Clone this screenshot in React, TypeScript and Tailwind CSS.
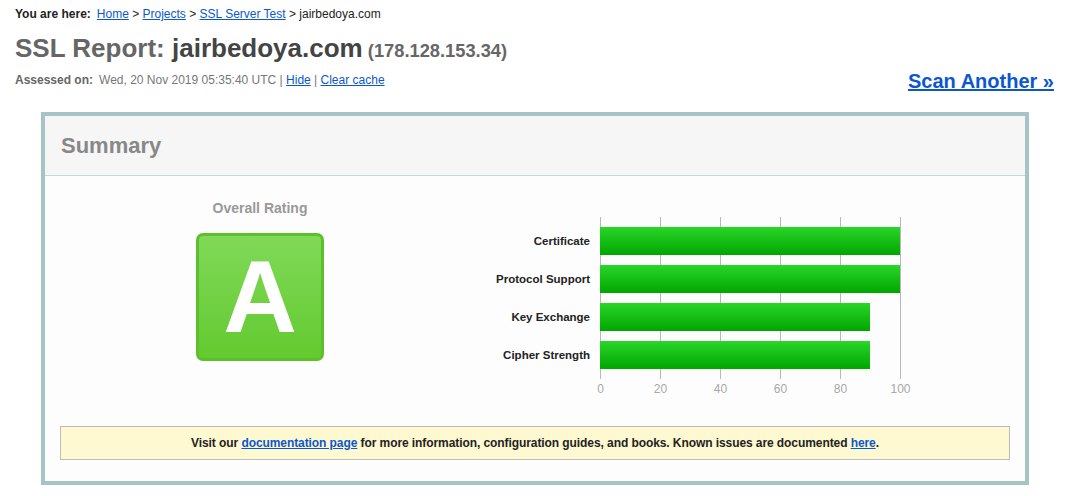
import React from "react";

const bars = [
  { label: "Certificate", value: 100 },
  { label: "Protocol Support", value: 100 },
  { label: "Key Exchange", value: 90 },
  { label: "Cipher Strength", value: 90 },
];

function Chart() {
  const x0 = 125;
  const ticks = [0, 20, 40, 60, 80, 100];
  return (
    <svg width="445" height="190" viewBox="0 0 445 190" className="block">
      <defs>
        <linearGradient id="barg" x1="0" y1="0" x2="0" y2="1">
          <stop offset="0" stopColor="#2ad62a" />
          <stop offset="1" stopColor="#00a600" />
        </linearGradient>
      </defs>
      {ticks.map((t) => (
        <line
          key={t}
          x1={x0 + t * 3 + 0.5}
          x2={x0 + t * 3 + 0.5}
          y1={7}
          y2={169}
          stroke="#b9b9b9"
          strokeWidth={1}
        />
      ))}
      {bars.map((b, i) => (
        <g key={b.label}>
          <rect x={x0} y={17 + i * 38} width={b.value * 3} height={28} fill="url(#barg)" />
          <text
            x={115}
            y={17 + i * 38 + 18}
            textAnchor="end"
            fontFamily="'Liberation Sans', Arial, sans-serif"
            fontWeight="bold"
            fontSize="11.5"
            fill="#222"
          >
            {b.label}
          </text>
        </g>
      ))}
      {ticks.map((t) => (
        <text
          key={"l" + t}
          x={x0 + t * 3 + 0.5}
          y={183}
          textAnchor="middle"
          fontFamily="'Liberation Sans', Arial, sans-serif"
          fontSize="12"
          fill="#a8a8a8"
        >
          {t}
        </text>
      ))}
    </svg>
  );
}

export default function App() {
  return (
    <div
      className="w-[1076px] h-[496px] overflow-hidden bg-white text-[#222]"
      style={{ fontFamily: "'Liberation Sans', Arial, sans-serif" }}
    >
      <div className="pl-[15px] pr-[22px]">
        <div className="pt-[6px] h-[22px] text-[12px] leading-[16px]">
          <span className="font-bold">You are here:</span>
          <span className="ml-[6px]">
            <a className="text-[#0b57d0] underline" href="#">Home</a>
            {" > "}
            <a className="text-[#0b57d0] underline" href="#">Projects</a>
            {" > "}
            <a className="text-[#0b57d0] underline" href="#">SSL Server Test</a>
            {" > jairbedoya.com"}
          </span>
        </div>
        <div className="mt-[11px] h-[30px] flex items-baseline font-bold whitespace-pre">
          <span className="text-[26px] leading-[30px] text-[#666]">SSL Report: </span>
          <span className="text-[26px] leading-[30px] text-[#444]">jairbedoya.com</span>
          <span className="text-[18.3px] leading-[30px] text-[#666]"> (178.128.153.34)</span>
        </div>
        <div className="mt-[6px] h-[24px] flex items-center justify-between">
          <div className="text-[12px] leading-[16px] -mt-[2px]">
            <span className="font-bold text-[#666]">Assessed on:</span>
            <span className="ml-[6px] text-[#777]">Wed, 20 Nov 2019 05:35:40 UTC</span>
            <span className="text-[#777]"> | </span>
            <a className="text-[#0b57d0] underline" href="#">Hide</a>
            <span className="text-[#777]"> | </span>
            <a className="text-[#0b57d0] underline" href="#">Clear cache</a>
          </div>
          <a className="text-[20px] leading-[24px] font-bold text-[#0b57d0] underline" href="#">
            Scan Another »
          </a>
        </div>
      </div>

      <div className="ml-[41px] mt-[19px] w-[988px] border-[4px] border-[#a6c4c6] bg-[#fdfdfd]">
        <div className="h-[60px] bg-[#f6f6f6] border-b border-[#c3d6d8] flex items-center pl-[16px]">
          <span className="text-[22px] leading-[26px] font-bold text-[#888]">Summary</span>
        </div>
        <div className="pb-[21px]">
          <div className="flex h-[250px]">
            <div className="w-[430px] pt-[24px] flex flex-col items-center">
              <div className="text-[14px] leading-[16px] font-bold text-[#999]">Overall Rating</div>
              <div className="mt-[17px] w-[128px] h-[128px] rounded-[7px] border-[3px] border-[#5cbf2c] bg-gradient-to-b from-[#80d957] to-[#63ca2e] flex items-center justify-center">
                <span className="text-[102px] leading-none font-bold text-white">A</span>
              </div>
            </div>
            <div className="mt-[34px]">
              <Chart />
            </div>
          </div>
          <div className="mx-[15px] h-[34px] border border-[#bcbcbc] bg-[#fff9d1] flex items-center justify-center text-[12px] font-bold tracking-[-0.08px] text-[#222]">
            <span>
              Visit our{" "}
              <a className="text-[#0b57d0] underline" href="#">documentation page</a>
              {" "}for more information, configuration guides, and books. Known issues are documented{" "}
              <a className="text-[#0b57d0] underline" href="#">here</a>.
            </span>
          </div>
        </div>
      </div>
    </div>
  );
}
